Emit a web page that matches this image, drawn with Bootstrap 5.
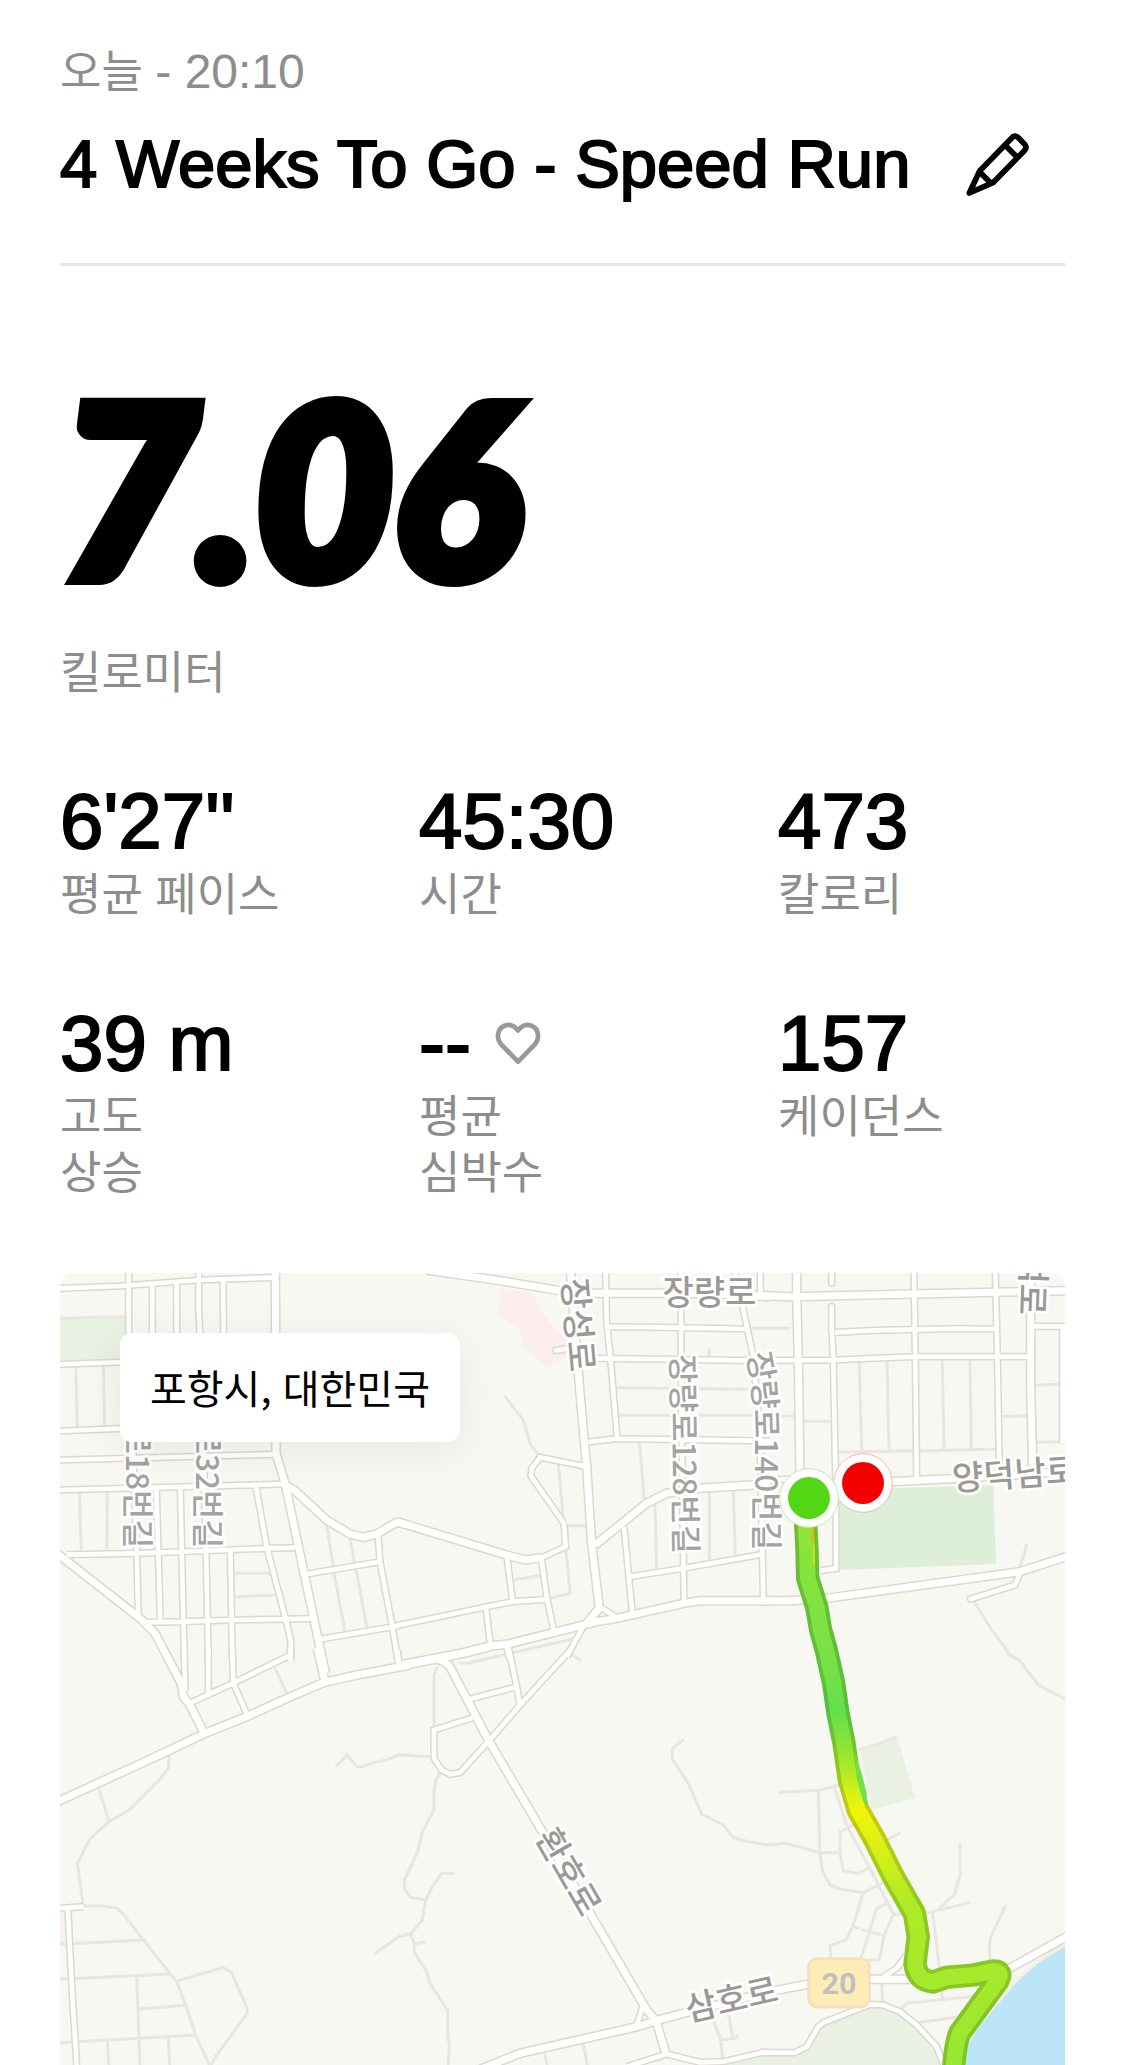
<!DOCTYPE html>
<html lang="ko">
  <head>
    <meta charset="UTF-8" />
    <meta name="viewport" content="width=device-width, initial-scale=1.0" />
    <title>4 Weeks To Go - Speed Run</title>
    <link
      href="https://cdn.jsdelivr.net/npm/bootstrap@5.3.3/dist/css/bootstrap.min.css"
      rel="stylesheet"
    />
    <style>
      body {
        background-color: #fff;
        color: #000;
        font-family: "Liberation Sans", "Noto Sans CJK KR", sans-serif;
      }

      .run-page {
        padding: 44px 60px 0;
      }

      .run-label {
        color: #8d8d8d;
        font-size: 45px;
        line-height: 56px;
      }

      .run-clock {
        font-size: 48px;
      }

      .run-title {
        font-size: 67px;
        line-height: 78px;
        font-weight: 400;
        -webkit-text-stroke: 2px #000;
      }

      .run-head {
        border-bottom: 3px solid #e5e5e5;
        padding: 24px 0 60px;
        gap: 56px;
      }

      .run-distance {
        font-family: Lato, sans-serif;
        font-size: 238px;
        font-weight: 900;
        font-style: italic;
        line-height: 200px;
        margin: 120px 0 60px;
        -webkit-text-stroke: 14px #000;
      }

      .run-stats {
        --bs-gutter-x: 72px;
        --bs-gutter-y: 72px;
        padding-top: 72px;
      }

      .run-value {
        font-size: 78px;
        line-height: 94px;
        -webkit-text-stroke: 2px #000;
      }

      .run-map {
        margin-top: 71px;
        border-radius: 14px 14px 0 0;
        background-color: #f7f8f2;
      }

      .map-place {
        top: 60px;
        left: 60px;
        padding: 26px 30px;
        border-radius: 12px;
        font-family: "Noto Sans CJK KR", sans-serif;
        font-size: 40px;
        line-height: 57px;
        box-shadow: 0 8px 44px rgba(0, 0, 0, 0.07);
      }

      /* roads are drawn twice: first the casing, then the surface */
      .roads-casing {
        --edge: 9px;
        stroke: #dcd7d0;
      }

      .roads-surface {
        --edge: 0px;
        stroke: #fff;
      }

      .road-main {
        stroke-width: calc(21px + var(--edge));
      }

      .road-side {
        stroke-width: calc(14px + var(--edge));
      }

      .map-tracks {
        stroke: #e9e5e0;
        stroke-width: 9px;
      }

      .map-names text {
        font-family: "Noto Sans CJK KR", sans-serif;
        font-size: 102px;
        font-weight: 500;
        fill: #9b9896;
        stroke: #fff;
        stroke-width: 16px;
        stroke-linejoin: round;
        paint-order: stroke;
        dominant-baseline: central;
      }

      .map-names .lane-name {
        font-size: 95px;
        fill: #a5a3a1;
      }

      .map-names .shield-number {
        font-family: Roboto, sans-serif;
        font-size: 91px;
        font-weight: 700;
        fill: #c0c0c0;
        stroke: none;
      }
    </style>
  </head>
  <body>
    <main class="container-fluid run-page">
      <p class="run-label mb-0">오늘 <time class="run-clock" datetime="20:10">- 20:10</time></p>
      <div class="run-head d-flex align-items-center">
        <h1 class="run-title mb-0">4 Weeks To Go - Speed Run</h1>
        <button type="button" class="btn border-0 p-0 lh-1" aria-label="이름 편집">
          <svg width="64" height="64" viewBox="55 38 192 192" fill="none" stroke="#000" stroke-width="17" stroke-linejoin="round" stroke-linecap="round">
            <path d="M65 221L96 155L190 58Q201 44 213 56L229 73Q240 83 230 94L136 190Z" />
            <path d="M175 80L208 113M96 158L126 188" />
          </svg>
        </button>
      </div>

      <div class="run-distance">7.06</div>
      <div class="run-label">킬로미터</div>

      <div class="row run-stats">
        <div class="col-4">
          <div class="run-value">6'27''</div>
          <div class="run-label">평균 페이스</div>
        </div>
        <div class="col-4">
          <div class="run-value">45:30</div>
          <div class="run-label">시간</div>
        </div>
        <div class="col-4">
          <div class="run-value">473</div>
          <div class="run-label">칼로리</div>
        </div>
        <div class="col-4">
          <div class="run-value">39 m</div>
          <div class="run-label">고도<br />상승</div>
        </div>
        <div class="col-4">
          <div class="run-value d-flex align-items-center gap-4">
            --
            <svg width="46" height="44" viewBox="254 55 136 130" fill="none" stroke="#999" stroke-width="14" stroke-linejoin="round">
              <path d="M322 175L275 127C256 108 260 78 282 69C299 62 312 70 322 83C332 70 345 62 362 69C384 78 388 108 369 127Z" />
            </svg>
          </div>
          <div class="run-label">평균<br />심박수</div>
        </div>
        <div class="col-4">
          <div class="run-value">157</div>
          <div class="run-label">케이던스</div>
        </div>
      </div>

      <div class="run-map position-relative overflow-hidden">
        <svg class="d-block w-100 h-auto" viewBox="0 0 3015 2376" fill="none" role="img" aria-label="러닝 경로 지도">
          <defs>
            <linearGradient id="paceFill" gradientUnits="userSpaceOnUse" x1="0" y1="-380" x2="0" y2="1245">
              <stop offset="0" stop-color="#8fe43a" />
              <stop offset="0.23" stop-color="#7be143" />
              <stop offset="0.35" stop-color="#64e04d" />
              <stop offset="0.43" stop-color="#9be62e" />
              <stop offset="0.53" stop-color="#f1f508" />
              <stop offset="0.6" stop-color="#d9f016" />
              <stop offset="0.7" stop-color="#b0ea26" />
              <stop offset="1" stop-color="#97e832" />
            </linearGradient>
            <linearGradient id="paceEdge" gradientUnits="userSpaceOnUse" x1="0" y1="-380" x2="0" y2="1245">
              <stop offset="0" stop-color="#72bd2e" />
              <stop offset="0.35" stop-color="#55c03e" />
              <stop offset="0.43" stop-color="#84c426" />
              <stop offset="0.53" stop-color="#c8cb0c" />
              <stop offset="0.7" stop-color="#91c822" />
              <stop offset="1" stop-color="#7dc428" />
            </linearGradient>
            <path id="route" d="M225 -490L137 -440L137 -380L141 -300L143 -215L170 -130L182 -60L200 5L221 100L234 190L252 280L268 390L294 480L345 570L400 680L463 790L475 860L465 940Q470 992 520 996L560 982L640 975L700 963Q730 962 714 992L600 1148Q586 1180 580 1260" />
            <path id="laneCurve" d="M2 274C22 356 26 440 28 560V900" />

            <g id="roads">
              <g transform="translate(-60 -39)">
                <path class="road-side" d="M60 85L240 78L480 60L710 52M266 39V220L290 870L295 1070M337 75V230M349 685L361 1085M410 68V230M421 685L430 1090L434 1200M476 39V150L480 230M490 545L498 870L505 1200M549 62L551 230M571 875L577 1200M60 313L250 306M60 513L250 505M60 600L700 583M60 690L740 672M80 884L300 880L680 865L765 863M310 1087L430 1085L580 1080L815 1076M648 680L680 860L735 1070L752 1140V1205M795 943L1022 905M1014 825L1020 905L1056 1095L1076 1215M838 1138L1060 1100L1090 1092" />
                <path class="road-main" d="M706 39L708 580L735 670L835 1140L856 1240M50 879L300 1075L345 1120L424 1270M735 675L765 692L860 780L930 822L970 832L1010 822L1070 787L1100 793" />
              </g>
              <g transform="translate(1020 -39)">
                <path class="road-side" d="M617 39L620 190L632 300L652 540M620 200L840 203L1045 207M590 295L840 298L1110 303M565 546L650 536L1110 543M842 39L845 500L852 1020M1005 39L1030 150L1060 290L1080 540L1090 1020M1081 39V100M562 620L420 592L395 625L393 648L492 790M492 790L497 860L420 895M424 895L440 1010L461 1110M320 885L338 1025M0 1095L260 1040L338 1025L440 1018M258 1045L271 1155M672 800L697 1060M690 950L850 925L1092 882M318 1155L330 1200M598 1040L650 1072M555 1090L500 1190" />
                <path class="road-side" stroke-linecap="round" d="M468 271L505 266" />
                <path class="road-main" d="M80 30L300 62L480 92L540 100H830L1000 104L1110 110M512 39L540 400L560 620L575 850L598 1045L560 1090M585 855L740 730L800 700L900 685L1110 672M-10 785L320 885L375 900L425 893M0 1215L180 1180L270 1158L320 1153L460 1118L590 1085L650 1075L850 1030L900 1022H1110" />
              </g>
              <g transform="translate(2100 -39)">
                <path class="road-side" d="M215 200L220 300L225 570L228 700V926L180 932M462 39L466 300L470 655M706 39L712 280L718 620M908 198V550M225 217L345 211L590 206L710 207M0 301L220 300L460 290L810 290M815 199H915M0 664L110 655" />
                <path class="road-side" stroke-linecap="round" d="M215 30V70M215 210V140M780 940L765 975L632 1017" />
                <path class="road-main" d="M0 106L90 110L460 102L915 92M110 39V110L115 300L120 650M812 70V380L818 620M230 666L390 665L600 655L915 635M0 1022H90L200 1015L780 935L925 888" />
              </g>
              <g transform="translate(-60 1131)">
                <path class="road-side" d="M432 0L436 120M505 -5V130M577 -5L580 100L622 195M752 -5V15L700 40L578 100L455 157M1072 0L1078 45M60 775L130 770M84 780L95 1000L110 1245" />
                <path class="road-main" d="M50 456L300 342L500 248L620 200L740 145L850 98L950 75L1110 45M424 100L430 140L450 165L490 245M832 -5L855 95" />
              </g>
              <g transform="translate(1020 1131)">
                <path class="road-side" d="M210 147L352 110M325 -10L350 110L360 165M516 -5L360 165L265 275L180 368L150 373L125 360L102 325V240L218 203M732 1060L710 1125M680 1250L800 1212L900 1237L970 1235L1090 1207H1110" />
                <path class="road-main" d="M0 48L120 25L200 8L270 -10M105 28Q140 30 155 60L265 270L430 550L740 1080L768 1112L798 1212M240 1258L360 1210L720 1128L768 1112L870 1085L1090 1030" />
              </g>
              <g transform="translate(2100 1131)">
                <path class="road-side" d="M0 1208H105L140 1190L175 1130L190 1118L330 1063L370 1065L420 1085L470 1125L530 1190L555 1255M370 980L410 955L440 915" />
                <path class="road-main" d="M0 1031L130 1005L340 988L480 988M735 963L925 857" />
              </g>
            </g>
          </defs>

          <!-- parks, campuses and the sea -->
          <path fill="#e9f1e2" d="M0 139L198 136V186L180 259L0 261Z" />
          <path fill="#fbeeed" d="M1323 46L1418 59L1450 126L1520 201L1525 251L1460 283L1387 219L1378 169L1310 119ZM0 1921H13L15 2011H0Z" />
          <path fill="#deefd9" d="M2335 651L2800 636L2808 873L2340 891Z" />
          <path fill="#eaf1e3" d="M2400 1431L2512 1393L2565 1574L2435 1611ZM1970 2376L2110 2341L2205 2339L2240 2321L2275 2261L2290 2249L2430 2194L2470 2196L2520 2216L2570 2256L2630 2321L2655 2376Z" />
          <path fill="#bce6f7" stroke="#f6f0e4" stroke-width="10" d="M3030 2008C2930 2060 2900 2092 2860 2131L2755 2257C2725 2300 2705 2350 2695 2390H3030Z" />

          <g class="map-tracks" stroke-linecap="round">
            <path transform="translate(-60 -39)" d="M60 175L256 170M107 320L112 500M190 318L194 498M118 700L124 872M202 695L201 872M585 940H695M585 1010L705 1005M860 795L880 920M930 830L945 920M882 940L914 1110M948 930L980 1100" />
            <path transform="translate(1020 -39)" d="M315 410L370 480L390 550L415 585M475 615L490 780M490 797H560M498 870L510 1000L448 1015M652 383L1060 388M655 466H1060M718 545L733 725M765 735L770 930M928 695V905M1000 690L1006 888M928 268L925 295M340 960L415 947M1055 205H1168M180 1210H200L515 1138M515 1185L540 1200" />
            <path transform="translate(2100 -39)" d="M60 468H100M130 484H210M298 310L305 570M381 305L387 570M547 305L552 570M630 305L634 568M230 577L460 572M480 573L708 567M730 470L800 467M825 376L900 373M830 547L905 545M800 855L780 920M640 1020L695 1110L730 1155L748 1185L778 1200" />
            <path transform="translate(-60 1131)" d="M388 320L385 355L360 387L267 480L207 515L150 567L112 640L130 770M178 420L207 515M130 768H185L232 775L250 793L390 970L410 995L437 1065L467 1155L508 1245M60 883L315 870M60 988L390 972M290 980L297 1165L300 1245M300 1077L437 1066M60 1178L467 1155M202 1178L207 1245M385 1160L389 1245M410 993L548 953L573 965L622 1075V1090L530 1215L512 1245M705 55L740 130M890 347L922 314L950 350H965L1000 338L1035 331L1080 314L1110 316M1008 908L1080 858L1110 852" />
            <path transform="translate(1020 1131)" d="M110 55L102 75V230M0 315L90 320M120 370L107 390L102 425V480L67 545L53 605L13 690V717L32 742L77 750L67 810L32 852L0 860M77 750L97 710L125 670H158M32 852L43 880V908L80 965L90 1000L143 1082V1150L148 1190L145 1245M43 882L75 876M848 270L817 296V327L865 400L905 492L970 525L1000 563L1045 575L1100 585M550 1185L562 1245M435 1215L442 1245M940 1110L962 1170L968 1225M985 1090L998 1165M962 1170L1005 1165L1012 1158" />
            <path transform="translate(2100 1131)" d="M740 0L748 12L778 30L835 105L915 147M300 298L360 280L408 260M60 427L175 421L240 404M175 421L180 610L187 663L210 705L240 717L310 728L365 700M0 582L30 585L75 580L180 608H240M222 408L262 530L330 655L400 793M280 525L240 545V610L250 662L295 670L325 655M310 728L278 830L258 870L210 887L213 925M278 830L295 834M308 840L372 857M400 793L372 857L358 930H325M378 762L350 775L303 925M400 793L500 790L628 758M530 783L583 733L600 675V583M380 570L418 550M518 790L537 940L547 1045M736 768L693 860L688 890L690 930M365 1000L368 1055M425 1075L440 1060L650 1038M480 1117L600 1100" />
          </g>

          <use href="#roads" class="roads-casing" />
          <use href="#roads" class="roads-surface" />

          <g class="map-names">
            <text transform="translate(1562 155) rotate(85)" text-anchor="middle">장성로</text>
            <text x="1948" y="52" text-anchor="middle">장량로</text>
            <text transform="translate(2676 610) rotate(-4)">양덕남로</text>
            <text transform="translate(2922 127) rotate(92)" text-anchor="end">덕로</text>
            <text transform="translate(1532 1793) rotate(60)" text-anchor="middle">환호로</text>
            <text transform="translate(2013 2172) rotate(-13)" text-anchor="middle">삼호로</text>
            <text class="lane-name" transform="translate(240 826) rotate(90)" text-anchor="end">로18번길</text>
            <text class="lane-name" transform="translate(449 826) rotate(90)" text-anchor="end">로32번길</text>
            <text class="lane-name" transform="translate(1880 543) rotate(89)" text-anchor="middle">장량로128번길</text>
            <text class="lane-name" transform="translate(2100 -39)"><textPath href="#laneCurve">장량로140번길</textPath></text>
            <rect x="2246" y="2057" width="182" height="145" rx="26" fill="#feecb5" stroke="#f9dfc1" stroke-width="9" />
            <text class="shield-number" x="2337" y="2132" text-anchor="middle">20</text>
          </g>

          <g transform="translate(2100 1131)" stroke-linejoin="round">
            <use href="#route" stroke="url(#paceEdge)" stroke-width="70" />
            <use href="#route" stroke="url(#paceFill)" stroke-width="47" />
            <path d="M285 310L305 370L320 430V474L308 450L290 385Z" fill="#6fe04a" />
            <path d="M157 -370V-325" stroke="#e5b50c" stroke-width="7" />
            <path d="M161 -315L162 -255" stroke="#d9df12" stroke-width="5" />
          </g>

          <!-- finish and start pins -->
          <circle cx="2409" cy="630" r="88" fill="#fff" stroke="#f5b5b5" stroke-width="3" />
          <circle cx="2409" cy="630" r="63" fill="#f50000" />
          <circle cx="2247" cy="675" r="88" fill="#fff" stroke="#bdebaa" stroke-width="3" />
          <circle cx="2247" cy="675" r="63" fill="#53d613" />
        </svg>
        <div class="map-place position-absolute bg-white">포항시, 대한민국</div>
      </div>
    </main>
    <script src="https://cdn.jsdelivr.net/npm/bootstrap@5.3.3/dist/js/bootstrap.bundle.min.js"></script>
  </body>
</html>
